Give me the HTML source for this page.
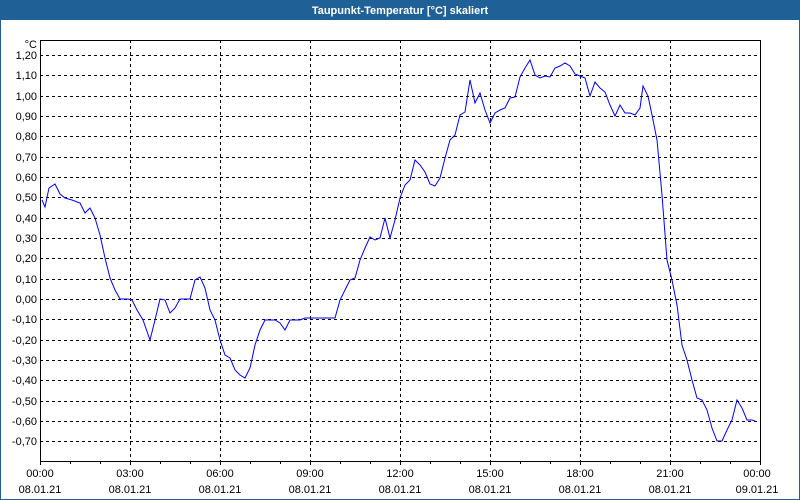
<!DOCTYPE html><html><head><style>
html,body{margin:0;padding:0;width:800px;height:500px;overflow:hidden;background:#fff}
svg{display:block}
text{font-family:"Liberation Sans",sans-serif;font-size:11px;fill:#000}
</style></head><body>
<svg width="800" height="500" xmlns="http://www.w3.org/2000/svg">
<rect x="0" y="0" width="800" height="500" fill="#fff"/>
<rect x="0" y="0" width="800" height="20" fill="#1f6096"/>
<rect x="0.5" y="0.5" width="799" height="499" fill="none" stroke="#1f6096"/>
<text x="400" y="14" text-anchor="middle" style="fill:#fff;font-weight:bold;font-size:11px">Taupunkt-Temperatur [°C] skaliert</text>
<g stroke="#000" stroke-dasharray="3,3" stroke-width="1">
<path d="M40 55.5H760M40 75.5H760M40 96.5H760M40 116.5H760M40 136.5H760M40 157.5H760M40 177.5H760M40 197.5H760M40 218.5H760M40 238.5H760M40 258.5H760M40 279.5H760M40 299.5H760M40 319.5H760M40 340.5H760M40 360.5H760M40 380.5H760M40 401.5H760M40 421.5H760M40 441.5H760"/>
<path d="M130.5 40V461M220.5 40V461M310.5 40V461M400.5 40V461M490.5 40V461M580.5 40V461M670.5 40V461"/>
</g>
<path d="M40.5 40V461.5H760.5V40" fill="none" stroke="#000"/>
<path d="M40.5 40.5H760" stroke="#000"/>
<g stroke="#000"><path d="M40.5 461v4M70.5 461v3M100.5 461v3M130.5 461v4M160.5 461v3M190.5 461v3M220.5 461v4M250.5 461v3M280.5 461v3M310.5 461v4M340.5 461v3M370.5 461v3M400.5 461v4M430.5 461v3M460.5 461v3M490.5 461v4M520.5 461v3M550.5 461v3M580.5 461v4M610.5 461v3M640.5 461v3M670.5 461v4M700.5 461v3M730.5 461v3M760.5 461v4"/></g>
<g text-anchor="end">
<text x="37" y="48">°C</text>
<text x="37" y="59">1,20</text><text x="37" y="79">1,10</text><text x="37" y="100">1,00</text><text x="37" y="120">0,90</text><text x="37" y="140">0,80</text><text x="37" y="161">0,70</text><text x="37" y="181">0,60</text><text x="37" y="201">0,50</text><text x="37" y="222">0,40</text><text x="37" y="242">0,30</text><text x="37" y="262">0,20</text><text x="37" y="283">0,10</text><text x="37" y="303">0,00</text><text x="37" y="323">-0,10</text><text x="37" y="344">-0,20</text><text x="37" y="364">-0,30</text><text x="37" y="384">-0,40</text><text x="37" y="405">-0,50</text><text x="37" y="425">-0,60</text><text x="37" y="445">-0,70</text>
</g>
<g text-anchor="middle">
<text x="40" y="477">00:00</text><text x="40" y="493">08.01.21</text>
<text x="130" y="477">03:00</text><text x="130" y="493">08.01.21</text>
<text x="220" y="477">06:00</text><text x="220" y="493">08.01.21</text>
<text x="310" y="477">09:00</text><text x="310" y="493">08.01.21</text>
<text x="400" y="477">12:00</text><text x="400" y="493">08.01.21</text>
<text x="490" y="477">15:00</text><text x="490" y="493">08.01.21</text>
<text x="580" y="477">18:00</text><text x="580" y="493">08.01.21</text>
<text x="670" y="477">21:00</text><text x="670" y="493">08.01.21</text>
<text x="757" y="477">00:00</text><text x="757" y="493">09.01.21</text>
</g>
<polyline fill="none" stroke="#0000ff" stroke-width="1" points="42,200 45,207 49,188 55,184 60,194 65,198 72,200 80,203 85,213 90,208 95,218 100,235 105,258 110,278 115,290 120,299 128,299 132,300 137,310 143,320 150,340 155,320 160,299 165,300 170,313 175,308 180,299 190,299 195,280 200,277 205,288 210,310 215,320 220,340 225,355 230,358 235,370 240,375 245,378 250,368 255,345 260,330 265,320 275,320 280,323 285,330 290,320 300,320 305,318 335,318 340,300 345,290 350,280 355,278 360,260 365,248 370,237 375,240 380,238 385,218 390,238 395,220 400,198 405,185 410,180 415,160 420,165 425,172 430,184 435,186 440,178 445,158 450,140 455,135 460,115 465,112 470,80 475,103 480,93 485,110 490,123 495,113 500,110 505,108 510,98 515,97 520,77 525,68 530,60 535,75 540,78 545,76 550,77 555,68 560,66 565,63 570,66 575,74 580,76 585,78 590,96 595,82 600,88 605,92 610,105 615,116 620,105 625,113 630,113 635,115 640,108 643,86 648,96 652,115 657,140 662,195 667,260 672,280 677,305 682,345 687,360 692,380 697,398 702,400 707,410 712,428 717,441 722,441 727,430 732,420 737,400 742,408 747,420 752,420 755,421"/>
</svg>
</body></html>
